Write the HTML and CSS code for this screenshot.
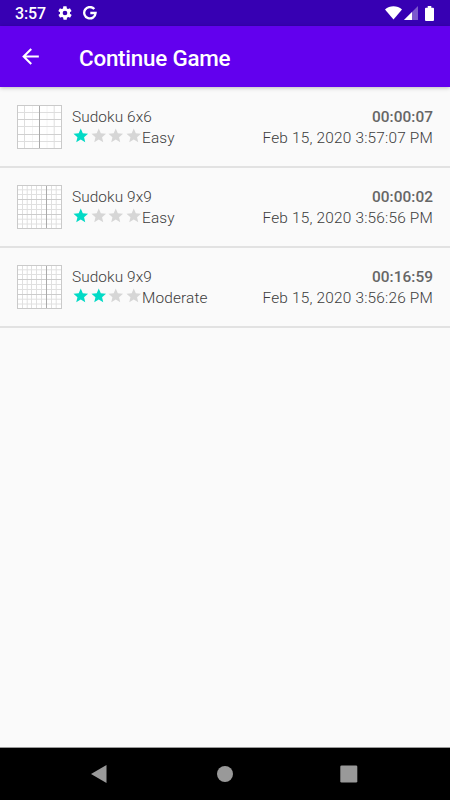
FILE: index.html
```html
<!DOCTYPE html>
<html lang="en">
<head>
<meta charset="utf-8">
<title>Continue Game</title>
<link rel="stylesheet" href="styles.css">
</head>
<body>
<svg class="defs" aria-hidden="true">
  <symbol id="star" viewBox="0 0 24 24"><path d="M12 17.27 18.18 21l-1.64-7.03L22 9.24l-7.19-.61L12 2 9.19 8.63 2 9.24l5.46 4.73L5.82 21z"/></symbol>
  <symbol id="grid6" viewBox="0 0 45 44">
    <rect width="45" height="44" fill="#fff"/>
    <path d="M15.5 0v44M30 0v44" stroke="#f4f4f4"/>
    <path d="M7.500 0v44M37.200 0v44M0 7.500h45M0 21.500h45M0 36.500h45" stroke="#dedede"/>
    <path d="M0 14.500h45M0 29.500h45" stroke="#d0d0d0"/>
    <path d="M22.500 0v44" stroke="#aaa"/>
    <rect x=".5" y=".5" width="44" height="43" fill="none" stroke="#cacaca"/>
  </symbol>
  <symbol id="grid9" viewBox="0 0 45 44">
    <rect width="45" height="44" fill="#fff"/>
    <path d="M5.500 0v44M10.200 0v44M14.500 0v44M19.500 0v44M24.500 0v44M34.500 0v44M39.200 0v44M0 4.800h45M0 9.500h45M0 19.500h45M0 24.500h45M0 34.200h45M0 39h45" stroke="#e0e0e0"/>
    <path d="M0 14.500h45M0 29.500h45" stroke="#ccc"/>
    <path d="M29.500 0v44" stroke="#aaa"/>
    <rect x=".5" y=".5" width="44" height="43" fill="none" stroke="#cacaca"/>
  </symbol>
</svg>
<div class="screen">
  <div class="status">
    <span class="clock">3:57</span>
    <svg class="gear" viewBox="0 0 24 24"><path d="M19.4 13c0-.3.1-.6.1-1s0-.7-.1-1l2.1-1.6c.2-.2.3-.4.1-.7l-2-3.400c-.1-.2-.4-.3-.6-.2l-2.500 1c-.5-.4-1.100-.7-1.700-1l-.4-2.600c0-.3-.2-.5-.5-.5h-4c-.2 0-.4.200-.5.400l-.4 2.700c-.6.200-1.100.600-1.700 1l-2.500-1c-.2-.1-.5 0-.6.200l-2 3.400c-.1.200-.1.500.1.700L4.600 11c0 .3-.1.700-.1 1s0 .7.100 1l-2.100 1.600c-.2.200-.3.400-.1.700l2 3.400c.1.200.4.300.6.200l2.500-1c.5.400 1.100.700 1.700 1l.4 2.600c0 .3.200.5.500.5h4c.2 0 .5-.2.500-.4l.4-2.700c.6-.2 1.200-.6 1.700-1l2.500 1c.2.1.5 0 .6-.2l2-3.400c.1-.2.1-.5-.1-.7zM12 15.500a3.500 3.500 0 1 1 0-7 3.500 3.500 0 0 1 0 7z"/></svg>
    <svg class="g-mark" viewBox="0 0 14 14"><path d="M11.300 3.100A5.700 5.700 0 1 0 12.600 7H7.300"/></svg>
    <svg class="wifi" viewBox="0 0 17 14"><path d="M0 3.400C4.700-.7 12.300-.7 17 3.400L8.500 13.600z"/></svg>
    <svg class="cell" viewBox="0 0 14 14"><path d="M14 0v14H0z" opacity=".35"/><path d="M8 6v8H0z"/></svg>
    <svg class="battery" viewBox="0 0 9 15"><path d="M2.700 0h3.600v1.700H8q1 0 1 1V14q0 1-1 1H1q-1 0-1-1V2.700q0-1 1-1h1.700z"/></svg>
  </div>
  <header class="appbar">
    <svg class="back" viewBox="0 0 24 24"><path d="M20 11H7.830l5.590-5.590L12 4l-8 8 8 8 1.410-1.410L7.830 13H20z"/></svg>
    <h1>Continue Game</h1>
  </header>
  <main class="games">
    <article class="game">
      <svg class="thumb"><use href="#grid6"/></svg>
      <div class="info">
        <div class="line"><span class="name">Sudoku 6x6</span><b>00:00:07</b></div>
        <div class="line"><span class="rating"><svg class="star on"><use href="#star"/></svg><svg class="star"><use href="#star"/></svg><svg class="star"><use href="#star"/></svg><svg class="star"><use href="#star"/></svg><span>Easy</span></span><span class="date">Feb 15, 2020 3:57:07 PM</span></div>
      </div>
    </article>
    <article class="game">
      <svg class="thumb"><use href="#grid9"/></svg>
      <div class="info">
        <div class="line"><span class="name">Sudoku 9x9</span><b>00:00:02</b></div>
        <div class="line"><span class="rating"><svg class="star on"><use href="#star"/></svg><svg class="star"><use href="#star"/></svg><svg class="star"><use href="#star"/></svg><svg class="star"><use href="#star"/></svg><span>Easy</span></span><span class="date">Feb 15, 2020 3:56:56 PM</span></div>
      </div>
    </article>
    <article class="game">
      <svg class="thumb"><use href="#grid9"/></svg>
      <div class="info">
        <div class="line"><span class="name">Sudoku 9x9</span><b>00:16:59</b></div>
        <div class="line"><span class="rating"><svg class="star on"><use href="#star"/></svg><svg class="star on"><use href="#star"/></svg><svg class="star"><use href="#star"/></svg><svg class="star"><use href="#star"/></svg><span>Moderate</span></span><span class="date">Feb 15, 2020 3:56:26 PM</span></div>
      </div>
    </article>
  </main>
  <nav class="navbar">
    <svg viewBox="0 0 20 20"><path d="M16.500 1v18L1 10z"/></svg>
    <svg viewBox="0 0 20 20"><circle cx="10" cy="10" r="8"/></svg>
    <svg viewBox="0 0 20 20"><rect x="1.300" y="1.500" width="17" height="17" rx="1.300"/></svg>
  </nav>
</div>
</body>
</html>
```
FILE: styles.css
```css
* { box-sizing: border-box; }
body { margin: 0; font-family: Roboto, "Liberation Sans", sans-serif; }
svg { display: block; flex: none; fill: currentColor; }
.defs { display: none; }
.screen { display: flex; flex-direction: column; width: 450px; height: 800px; background: #fafafa; }
.status { display: flex; align-items: center; height: 26px; padding: 0 16px 0 15px; background: #3700b3; color: #fff; }
.clock { width: 42px; padding-top: 2px; font-size: 16px; font-weight: 500; line-height: 24px; letter-spacing: -.1px; }
.gear { width: 16px; height: 16px; margin-right: 10px; }
.g-mark { width: 14px; height: 14px; margin-right: auto; fill: none; stroke: currentColor; stroke-width: 2.3; }
.wifi { width: 17px; height: 14px; margin-right: 2px; }
.cell { width: 14px; height: 14px; margin-right: 7px; }
.battery { width: 9px; height: 15px; }
.appbar { display: flex; align-items: center; height: 61px; padding-left: 18px; background: #6200ee; color: #fff; box-shadow: 0 1px 4px rgba(0, 0, 0, .25); }
.back { width: 25px; height: 25px; margin-right: 36px; }
.appbar h1 { margin: 3px 0 0; font-size: 22.400px; font-weight: 500; line-height: 28px; letter-spacing: -.22px; }
.games { flex: 1; padding-top: 1px; }
.game { display: flex; height: 80px; padding: 17px 17px 0; border-bottom: 2px solid #e2e2e2; }
.thumb { width: 45px; height: 44px; margin-right: 10px; }
.info { flex: 1; }
.line { display: flex; justify-content: space-between; height: 21px; font-size: 15.400px; font-weight: 300; line-height: 24px; letter-spacing: .15px; color: #3c3c3c; white-space: nowrap; }
.line b { font-weight: 500; letter-spacing: .05px; color: #666; }
.name { letter-spacing: .08px; }
.date { letter-spacing: .19px; }
.rating { display: flex; }
.star { width: 17.500px; height: 17.500px; margin-top: .5px; color: #d6d6d6; }
.star.on { color: #03dac6; }
.navbar { display: flex; align-items: center; justify-content: space-between; height: 53px; padding: 0 91px 0 90px; border-top: 1px solid #999; background: #000; color: #999; }
.navbar svg { width: 20px; height: 20px; }
```
